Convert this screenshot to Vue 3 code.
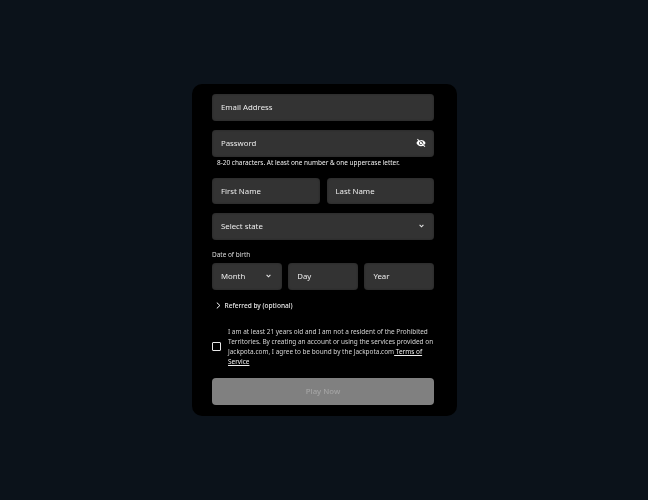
<template>
  <div class="page">
    <form class="card" @submit.prevent>
      <div class="field">Email Address</div>

      <div class="password-group">
        <div class="field with-icon">
          <span>Password</span>
          <svg class="eye" width="10" height="10" viewBox="0 0 24 24" fill="#fff">
            <path d="M12 4.500C7 4.500 2.700 7.600 1 12c1.700 4.400 6 7.500 11 7.500s9.300-3.100 11-7.500c-1.700-4.400-6-7.500-11-7.500zm0 12.500a5 5 0 1 1 0-10 5 5 0 0 1 0 10zm0-8a3 3 0 1 0 0 6 3 3 0 0 0 0-6z" />
            <path d="M3.500 2.500l18 18" stroke="#fff" stroke-width="2.800" />
            <path d="M5.500 2l18 18" stroke="#333" stroke-width="1.300" />
          </svg>
        </div>
        <p class="hint">8-20 characters. At least one number &amp; one uppercase letter.</p>
      </div>

      <div class="row two">
        <div class="field">First Name</div>
        <div class="field">Last Name</div>
      </div>

      <div class="field with-icon select-state">
        <span>Select state</span>
        <svg class="chevron" width="5" height="4" viewBox="0 0 5 4">
          <path d="M0.600 0.800L2.500 2.800L4.400 0.800" />
        </svg>
      </div>

      <div class="dob">
        <label class="dob-label">Date of birth</label>
        <div class="row three">
          <div class="field with-icon month">
            <span>Month</span>
            <svg class="chevron" width="5" height="4" viewBox="0 0 5 4">
              <path d="M0.600 0.800L2.500 2.800L4.400 0.800" />
            </svg>
          </div>
          <div class="field">Day</div>
          <div class="field">Year</div>
        </div>
      </div>

      <div class="referred">
        <svg width="5" height="7" viewBox="0 0 5 7">
          <path d="M0.800 0.600L3.900 3.500L0.800 6.400" />
        </svg>
        <span>Referred by (optional)</span>
      </div>

      <div class="terms">
        <span class="checkbox"></span>
        <p>
          I am at least 21 years old and I am not a resident of the Prohibited
          Territories. By creating an account or using the services provided on
          Jackpota.com, I agree to be bound by the Jackpota.com<a> Terms of</a> <a>Service</a>
        </p>
      </div>

      <button class="play" type="submit" disabled>Play Now</button>
    </form>
  </div>
</template>

<script setup>
</script>

<style scoped>
.page {
  height: 500px;
  display: flex;
  align-items: center;
  justify-content: center;
  background-color: #0b121a;
  font-family: "Noto Sans", "Open Sans", sans-serif;
}

.card {
  width: 265px;
  height: 332px;
  box-sizing: border-box;
  padding: 10px 23px 11px 20px;
  background-color: #000;
  border-radius: 10px;
  display: flex;
  flex-direction: column;
  will-change: transform;
}

.card > * {
  flex: none;
}

.field {
  height: 26.500px;
  box-sizing: border-box;
  padding: 0 9px;
  display: flex;
  align-items: center;
  background-color: #333;
  border-radius: 4px;
  box-shadow: inset 0 0 2px #222;
  color: #ececec;
  font-size: 7.800px;
}

.with-icon {
  justify-content: space-between;
}

.password-group {
  margin-top: 9.500px;
}

.eye {
  margin-right: -1px;
}

.hint {
  margin: 1.500px 0 0 5px;
  color: #efefef;
  font-size: 6.450px;
  line-height: 10px;
  white-space: nowrap;
}

.row {
  display: flex;
}

.row.two {
  margin-top: 9.500px;
  gap: 7px;
}

.row.two .field {
  flex: 1;
}

.select-state {
  margin-top: 9px;
}

.chevron path {
  fill: none;
  stroke: #e4e4e4;
  stroke-width: 1.100;
}

.select-state .chevron {
  margin-right: 1px;
}

.dob {
  margin-top: 10.500px;
}

.dob-label {
  display: block;
  color: #ddd;
  font-size: 6.450px;
  line-height: 9px;
  margin-bottom: 4px;
}

.row.three {
  display: grid;
  grid-template-columns: repeat(3, 1fr);
  gap: 6.700px;
}

.month {
  padding-right: 11px;
}

.referred {
  margin: 11px 0 0 4px;
  display: flex;
  align-items: center;
  gap: 3.500px;
  height: 9px;
  color: #e8e8e8;
  font-size: 6.550px;
  font-weight: 500;
}

.referred path {
  fill: none;
  stroke: #fff;
  stroke-width: 1;
}

.terms {
  margin-top: 17px;
  display: flex;
  align-items: center;
  gap: 7px;
}

.checkbox {
  flex: none;
  width: 7px;
  height: 7px;
  border: 1px solid #e8e8e8;
  border-radius: 1px;
}

.terms p {
  margin: 0;
  color: #d4d4d4;
  font-size: 6.450px;
  line-height: 10px;
  width: 206px;
}

.terms a {
  color: #eee;
  text-decoration: underline;
}

.play {
  margin-top: 11.500px;
  height: 26.500px;
  border: none;
  border-radius: 4px;
  background-color: #808080;
  color: #a3a3a3;
  font-family: inherit;
  font-size: 7.800px;
  font-weight: 500;
}
</style>
